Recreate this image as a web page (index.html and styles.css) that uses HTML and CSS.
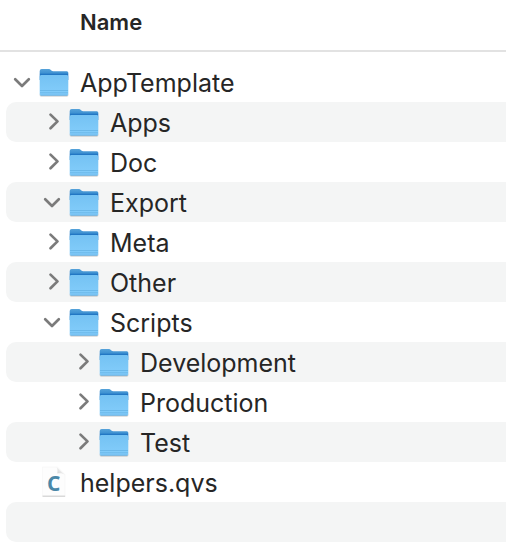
FILE: index.html
```
<!DOCTYPE html>
<html lang="en">
<head>
<meta charset="utf-8">
<meta name="viewport" content="width=device-width, initial-scale=1">
<title>AppTemplate</title>
<link rel="stylesheet" href="styles.css">
</head>
<body>
<svg class="defs" aria-hidden="true">
  <defs>
    <linearGradient id="back" x1="0" y1="0" x2="0" y2="1">
      <stop offset="0" stop-color="#57a3da"/>
      <stop offset="0.35" stop-color="#3f92d2"/>
      <stop offset="0.5" stop-color="#2277c4"/>
      <stop offset="1" stop-color="#2277c4"/>
    </linearGradient>
    <linearGradient id="front" x1="0" y1="0" x2="0" y2="1">
      <stop offset="0" stop-color="#74c2f3"/>
      <stop offset="1" stop-color="#84cdfb"/>
    </linearGradient>
    <linearGradient id="curl" x1="0" y1="1" x2="1" y2="0">
      <stop offset="0" stop-color="#cfcfcf"/>
      <stop offset="0.6" stop-color="#f1f1f1"/>
      <stop offset="1" stop-color="#ffffff"/>
    </linearGradient>
    <symbol id="folder" viewBox="0 0 32 32">
      <rect x="1.500" y="27" width="29" height="3.800" rx="1.800" fill="#000" opacity="0.16"/>
      <path d="M1.700 5a2 2 0 0 1 2-2h6.800c1 0 1.600.3 2.300 1l.6.500c.5.500 1 .7 1.800.7H28.800a1.500 1.500 0 0 1 1.500 1.500V14H1.700z" fill="url(#back)"/>
      <path d="M1.700 10.500a1.500 1.500 0 0 1 1.500-1.500h25.600a1.500 1.500 0 0 1 1.500 1.500V28a1.500 1.500 0 0 1-1.500 1.500H3.200A1.500 1.500 0 0 1 1.700 28z" fill="url(#front)"/>
      <path d="M2 24.500h28M2 26.800h28" stroke="#62b0e2" stroke-width="0.7"/>
      <path d="M2.500 29.200h27" stroke="#56a4d8" stroke-width="0.7"/>
    </symbol>
    <symbol id="down" viewBox="0 0 24 24">
      <path d="M5.200 9.300 12 16l6.800-6.700" fill="none" stroke="#7b7b7b" stroke-width="2.700" stroke-linecap="round" stroke-linejoin="round"/>
    </symbol>
    <symbol id="right" viewBox="0 0 24 24">
      <path d="M10.500 4.600 17.500 11.400 10.500 18.200" fill="none" stroke="#7b7b7b" stroke-width="2.700" stroke-linecap="round" stroke-linejoin="round"/>
    </symbol>
  </defs>
</svg>
<table class="files">
  <thead><tr><th scope="col">Name</th></tr></thead>
  <tbody>
    <tr><td><div class="row"><button class="toggle" aria-label="Collapse AppTemplate"><svg><use href="#down"/></svg></button><svg class="icon"><use href="#folder"/></svg><span class="name">AppTemplate</span></div></td></tr>
    <tr><td><div class="row level-1"><button class="toggle" aria-label="Expand Apps"><svg><use href="#right"/></svg></button><svg class="icon"><use href="#folder"/></svg><span class="name">Apps</span></div></td></tr>
    <tr><td><div class="row level-1"><button class="toggle" aria-label="Expand Doc"><svg><use href="#right"/></svg></button><svg class="icon"><use href="#folder"/></svg><span class="name">Doc</span></div></td></tr>
    <tr><td><div class="row level-1"><button class="toggle" aria-label="Collapse Export"><svg><use href="#down"/></svg></button><svg class="icon"><use href="#folder"/></svg><span class="name">Export</span></div></td></tr>
    <tr><td><div class="row level-1"><button class="toggle" aria-label="Expand Meta"><svg><use href="#right"/></svg></button><svg class="icon"><use href="#folder"/></svg><span class="name">Meta</span></div></td></tr>
    <tr><td><div class="row level-1"><button class="toggle" aria-label="Expand Other"><svg><use href="#right"/></svg></button><svg class="icon"><use href="#folder"/></svg><span class="name">Other</span></div></td></tr>
    <tr><td><div class="row level-1"><button class="toggle" aria-label="Collapse Scripts"><svg><use href="#down"/></svg></button><svg class="icon"><use href="#folder"/></svg><span class="name">Scripts</span></div></td></tr>
    <tr><td><div class="row level-2"><button class="toggle" aria-label="Expand Development"><svg><use href="#right"/></svg></button><svg class="icon"><use href="#folder"/></svg><span class="name">Development</span></div></td></tr>
    <tr><td><div class="row level-2"><button class="toggle" aria-label="Expand Production"><svg><use href="#right"/></svg></button><svg class="icon"><use href="#folder"/></svg><span class="name">Production</span></div></td></tr>
    <tr><td><div class="row level-2"><button class="toggle" aria-label="Expand Test"><svg><use href="#right"/></svg></button><svg class="icon"><use href="#folder"/></svg><span class="name">Test</span></div></td></tr>
    <tr><td><div class="row"><span class="toggle"></span><svg class="icon" viewBox="0 0 32 32" aria-hidden="true">
      <path d="M4.500 1H19.500L27 8.500V30H4.500z" fill="#fdfdfd" stroke="#f5f5f5" stroke-width="0.6"/>
      <path d="M4.500 30.200h22.700" stroke="#c4c4c4" stroke-width="0.9"/>
      <path d="M18.500 1c1.200 1.500 1.200 4 .8 6.500 3-.5 6-.2 7.700 1.500z" fill="url(#curl)"/>
      <text class="badge" x="9" y="25">C</text>
    </svg><span class="name">helpers.qvs</span></div></td></tr>
    <tr><td><div class="row"></div></td></tr>
  </tbody>
</table>
</body>
</html>
```
FILE: styles.css
```
body {
  margin: 0;
  background: #fff;
  color: #262626;
  font-family: Inter, "Liberation Sans", sans-serif;
}

.defs {
  position: absolute;
  width: 0;
  height: 0;
}

.files {
  width: 100%;
  border-spacing: 0;
}

.files th {
  height: 44px;
  padding: 0 0 6px 80px;
  border-bottom: 2px solid #e2e2e2;
  font-size: 22px;
  font-weight: 600;
  line-height: 28px;
  text-align: left;
}

.files td {
  padding: 0;
}

.files tbody::before {
  content: "";
  display: block;
  height: 10px;
}

.row {
  display: flex;
  align-items: center;
  height: 40px;
  margin-left: 6px;
  padding-left: 4px;
  border-radius: 10px 0 0 10px;
}

.files tr:nth-child(even) .row {
  background: #f4f5f5;
}

.level-1 {
  padding-left: 34px;
}

.level-2 {
  padding-left: 64px;
}

.toggle {
  width: 24px;
  height: 24px;
  margin-right: 4px;
  padding: 0;
  border: 0;
  background: none;
}

.toggle svg {
  display: block;
  width: 24px;
  height: 24px;
}

.icon {
  width: 32px;
  height: 32px;
  margin-right: 10px;
}

.name {
  padding-top: 2px;
  font-size: 25px;
  font-weight: 400;
  line-height: 38px;
  white-space: nowrap;
}

.badge {
  fill: #4a88a8;
  font-family: "Open Sans", "Noto Sans", sans-serif;
  font-size: 21px;
  font-weight: 700;
}
```
